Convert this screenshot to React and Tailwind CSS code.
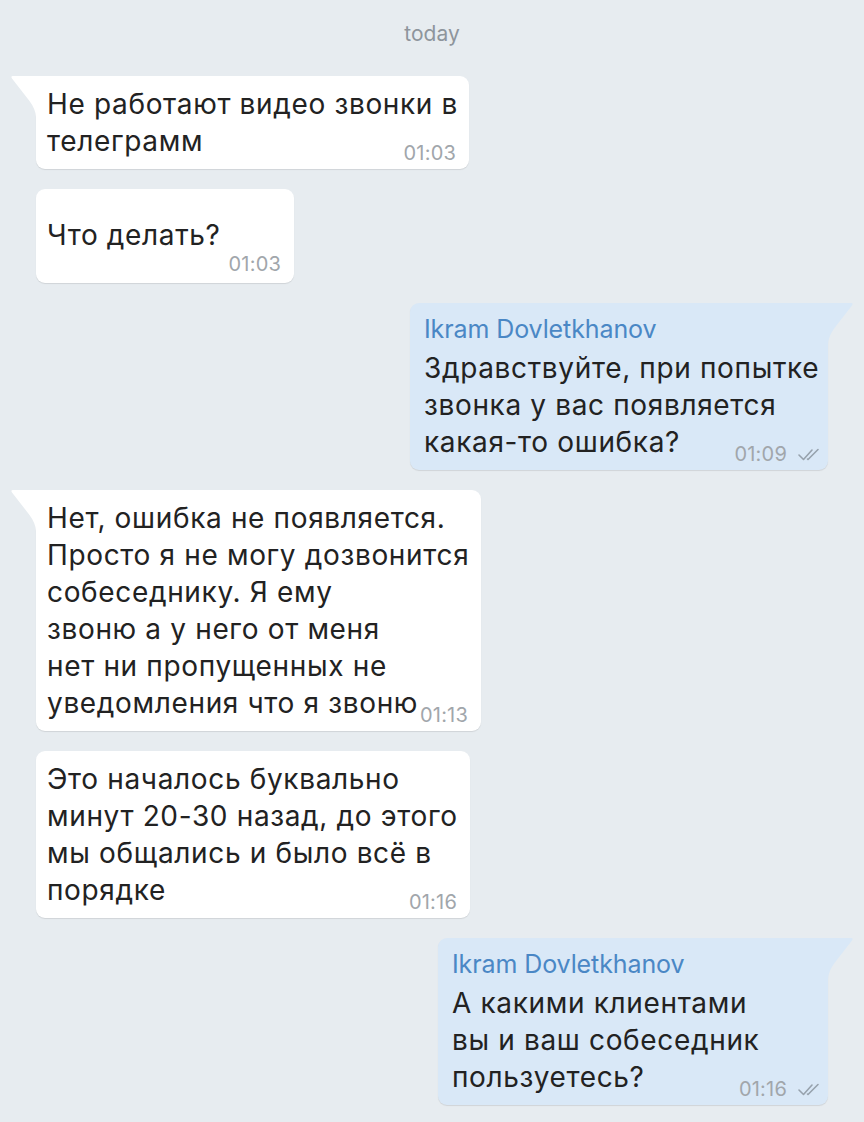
import React from "react";

const font = { fontFamily: "Inter, 'Noto Sans', sans-serif" };

function DoubleCheck() {
  return (
    <svg width="22" height="13" viewBox="0 0 22 13" fill="none" stroke="#97a2ad" strokeWidth="1.6" strokeLinecap="round" strokeLinejoin="round">
      <path d="M1 7 L5.5 11.5 L14 2" />
      <path d="M9.5 11 L10 11.5 L20 1.5" />
    </svg>
  );
}

function TailLeft() {
  return (
    <svg className="absolute -left-[25px] top-0" width="26" height="41" viewBox="0 0 26 41">
      <path d="M26 0 L1.8 0 Q-0.6 0.3 1 2.4 L18.5 25 Q24.5 33 25 41 L26 41 Z" fill="#ffffff" />
    </svg>
  );
}

function TailRight() {
  return (
    <svg className="absolute -right-[25px] top-0" width="26" height="41" viewBox="0 0 26 41">
      <path d="M0 0 L24.2 0 Q26.6 0.3 25 2.4 L7.5 25 Q1.5 33 1 41 L0 41 Z" fill="#d9e8f7" />
    </svg>
  );
}

function Time({ t, check }) {
  return (
    <span className="flex shrink-0 items-center gap-[11px] -mb-[3px] text-[20px] leading-[20px] tracking-[0.2px] text-[#a1a6ab] whitespace-nowrap">
      {t}
      {check && <DoubleCheck />}
    </span>
  );
}

function Incoming({ w, lines, time, tail, timeOwnRow }) {
  const last = lines[lines.length - 1];
  return (
    <div
      className={`relative bg-white rounded-[9px] ${tail ? "rounded-tl-none" : ""} shadow-[0_1px_1px_rgba(0,0,0,0.1)] pl-[11px] pr-[13px] pt-[10px] pb-[9px]`}
      style={{ width: w }}
    >
      {tail && <TailLeft />}
      {timeOwnRow && <div className="h-[18px]" />}
      <div className="text-[28px] leading-[37px] tracking-[0.65px] text-[#222222] whitespace-nowrap">
        {lines.slice(0, -1).map((l, i) => (
          <div key={i}>{l}</div>
        ))}
        {timeOwnRow ? (
          <>
            <div>{last}</div>
            <div className="flex justify-end pb-[3px]">
              <Time t={time} />
            </div>
          </>
        ) : (
          <div className="flex items-end justify-between">
            <span>{last}</span>
            <Time t={time} />
          </div>
        )}
      </div>
    </div>
  );
}

function Outgoing({ w, lines, time }) {
  const last = lines[lines.length - 1];
  return (
    <div
      className="relative bg-[#d9e8f7] rounded-[9px] rounded-tr-none shadow-[0_1px_1px_rgba(0,0,0,0.1)] pl-[14px] pr-[8px] pt-[11px] pb-[9px]"
      style={{ width: w }}
    >
      <TailRight />
      <div className="text-[25px] leading-[30px] tracking-[-0.1px] text-[#4a87c5] whitespace-nowrap">Ikram Dovletkhanov</div>
      <div className="mt-[6px] text-[28px] leading-[37px] tracking-[0.65px] text-[#222222] whitespace-nowrap">
        {lines.slice(0, -1).map((l, i) => (
          <div key={i}>{l}</div>
        ))}
        <div className="flex items-end justify-between">
          <span>{last}</span>
          <Time t={time} check />
        </div>
      </div>
    </div>
  );
}

export default function App() {
  return (
    <div className="min-h-[1122px] w-[864px] bg-[#e7ecf0] overflow-hidden" style={font}>
      <div className="pt-[22px] text-center text-[21px] leading-[24px] text-[#8e959c]">today</div>
      <div className="mt-[30px] flex flex-col gap-[20px] px-[36px]">
        <Incoming w={433} tail time="01:03" lines={["Не работают видео звонки в", "телеграмм"]} />
        <Incoming w={258} time="01:03" timeOwnRow lines={["Что делать?"]} />
        <div className="flex justify-end">
          <Outgoing
            w={418}
            time="01:09"
            lines={["Здравствуйте, при попытке", "звонка у вас появляется", "какая-то ошибка?"]}
          />
        </div>
        <Incoming
          w={445}
          tail
          time="01:13"
          lines={[
            "Нет, ошибка не появляется.",
            "Просто я не могу дозвонится",
            "собеседнику. Я ему",
            "звоню а у него от меня",
            "нет ни пропущенных не",
            "уведомления что я звоню",
          ]}
        />
        <Incoming
          w={434}
          time="01:16"
          lines={["Это началось буквально", "минут 20-30 назад, до этого", "мы общались и было всё в", "порядке"]}
        />
        <div className="flex justify-end">
          <Outgoing w={390} time="01:16" lines={["А какими клиентами", "вы и ваш собеседник", "пользуетесь?"]} />
        </div>
      </div>
    </div>
  );
}
